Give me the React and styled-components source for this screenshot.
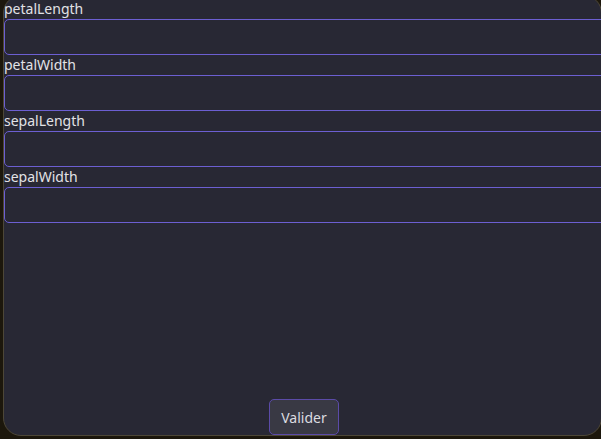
import React from "react";
import styled, { createGlobalStyle } from "styled-components";

const fields = ["petalLength", "petalWidth", "sepalLength", "sepalWidth"];

const App = () => {
	return (
		<>
			<GlobalStyle />
			<Card>
				<Fields>
					{fields.map((name) => (
						<Field key={name}>
							<Label htmlFor={name}>{name}</Label>
							<Input id={name} type="text" />
						</Field>
					))}
				</Fields>
				<Actions>
					<SubmitButton type="button">Valider</SubmitButton>
				</Actions>
			</Card>
		</>
	);
};

const GlobalStyle = createGlobalStyle`
	html, body {
		margin: 0;
		padding: 0;
		background-color: #1c170c;
		overflow: hidden;
	}

	body {
		font-family: "Noto Sans", "Open Sans", sans-serif;
	}
`;

const Card = styled.div`
	box-sizing: border-box;
	display: flex;
	flex-direction: column;
	width: 599px;
	height: 441px;
	margin: -5px 0 0 3px;
	padding: 3px 0 0 0;
	background-color: #282834;
	border: 1px solid #4d4737;
	border-radius: 18px;
	overflow: hidden;
`;

const Fields = styled.div`
	display: flex;
	flex-direction: column;
	flex: 1;
`;

const Field = styled.div`
	display: flex;
	flex-direction: column;
	gap: 1px;
`;

const Label = styled.label`
	display: block;
	height: 19px;
	line-height: 20px;
	font-size: 14px;
	color: #e2e2e6;
	overflow: visible;
`;

const Input = styled.input`
	box-sizing: border-box;
	width: calc(100% + 12px);
	height: 36px;
	margin: 0;
	padding: 0 8px;
	background-color: #282834;
	border: 1px solid #6c5fd2;
	border-radius: 5px;
	color: #e2e2e6;
	font-family: inherit;
	font-size: 14px;
	outline: none;
`;

const Actions = styled.div`
	display: flex;
	justify-content: center;
`;

const SubmitButton = styled.button`
	box-sizing: border-box;
	width: 70px;
	height: 36px;
	margin-left: 3px;
	background-color: #393944;
	border: 1px solid #5b4ba8;
	border-radius: 5px;
	color: #dcdce0;
	font-family: inherit;
	font-size: 14px;
	cursor: pointer;
`;

export default App;
